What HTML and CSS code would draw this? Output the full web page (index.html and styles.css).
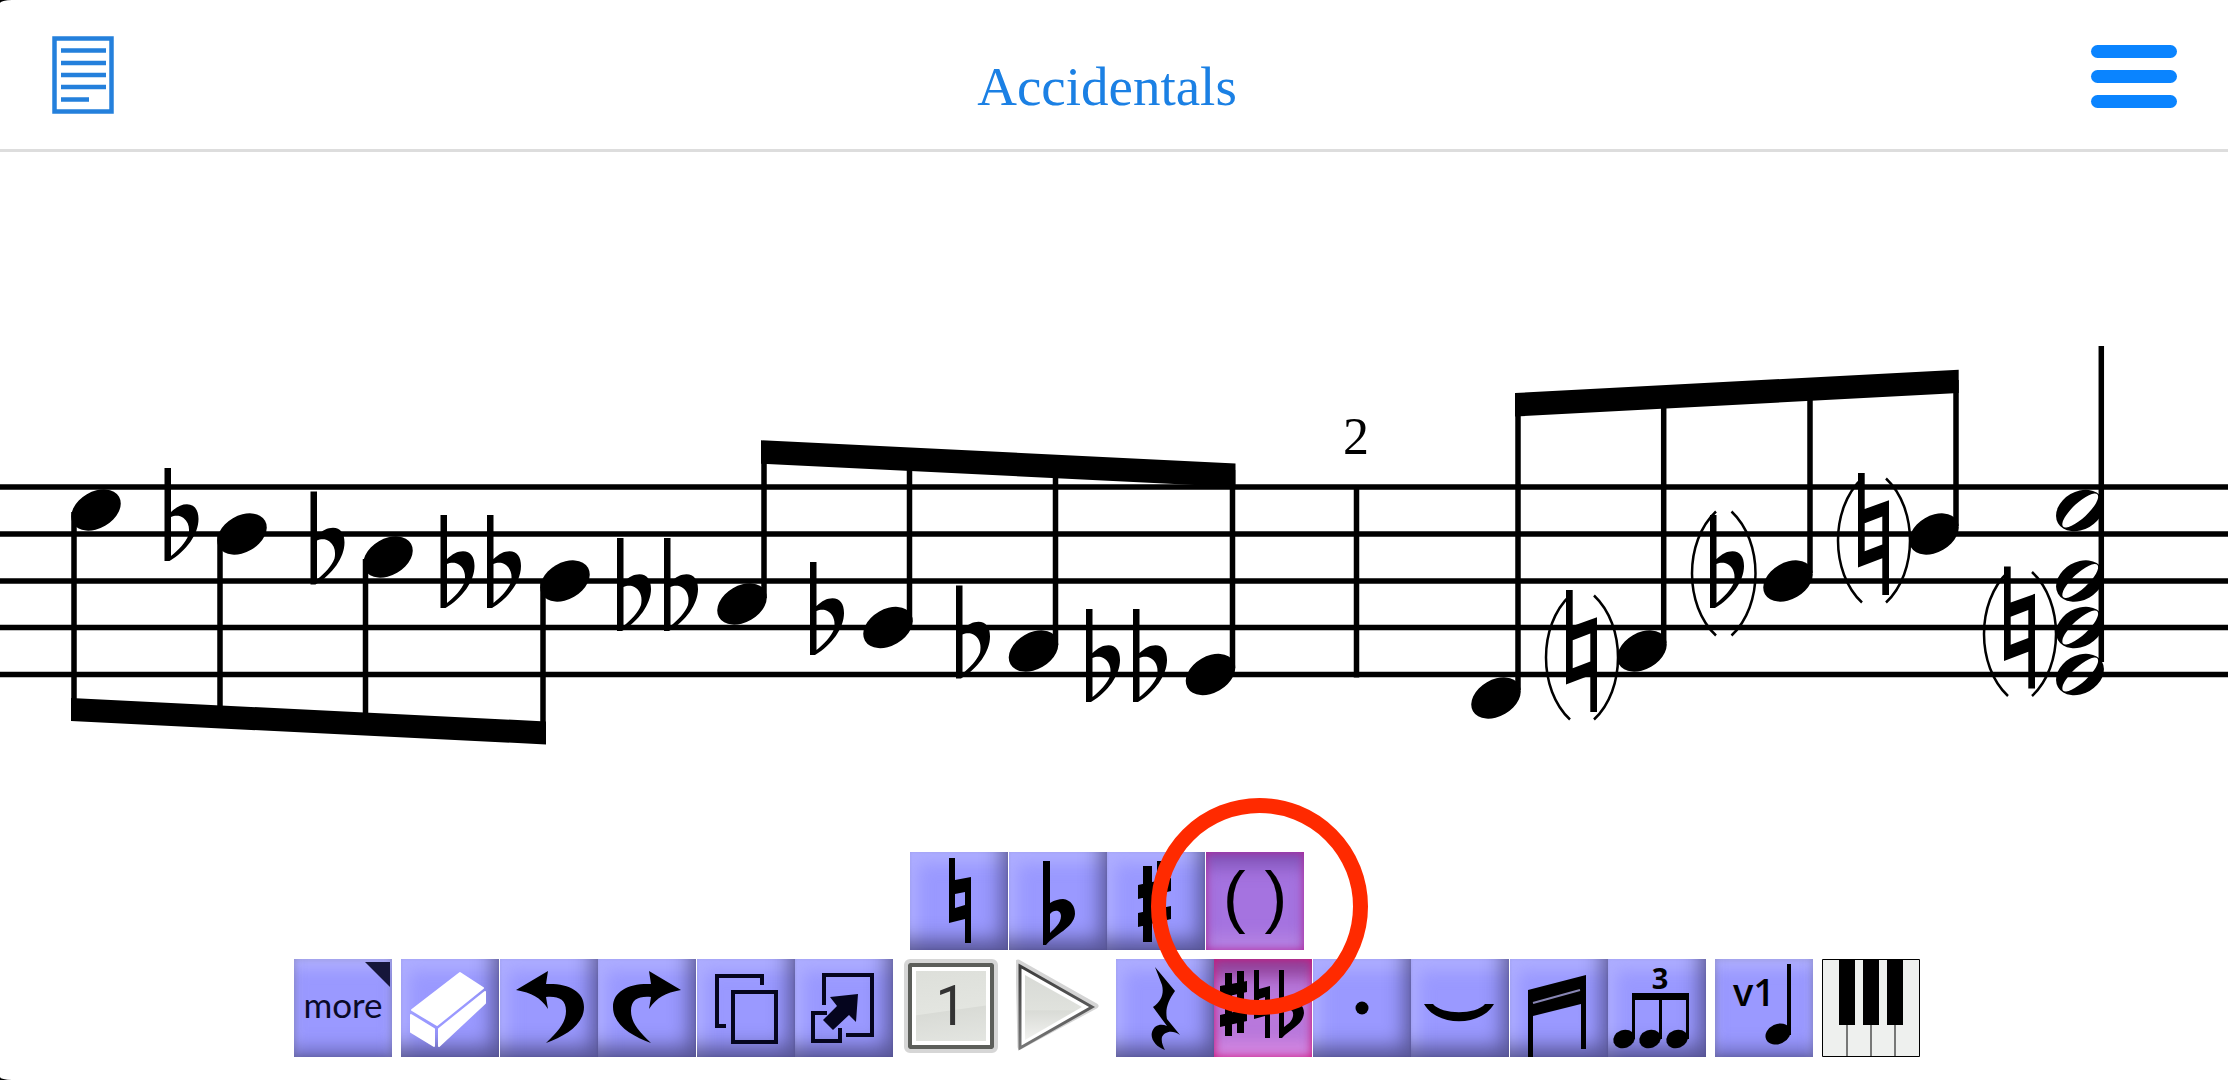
FILE: index.html
```html
<!DOCTYPE html>
<html lang="en">
<head>
    <meta charset="utf-8">
    <title>Accidentals</title>
    <link rel="stylesheet" href="styles.css">
</head>
<body>
    <div class="app">
        <header class="topbar">
            <button class="plain" aria-label="Scores">
                <svg width="62" height="78" viewBox="0 0 62 78" fill="none" stroke="#2480dc" stroke-width="4.500">
                    <path d="M2.500 2.500H59.500V75.500H2.500Z"/>
                    <path d="M9 14.500H54M9 27H54M9 39H54M9 51H54M9 63.500H37"/>
                </svg>
            </button>
            <h1>Accidentals</h1>
            <button class="plain menu" aria-label="Menu">
                <span class="bar"></span>
                <span class="bar"></span>
                <span class="bar"></span>
            </button>
        </header>

        <main class="score">
            <svg class="staff" viewBox="0 152 2228 700">
                <defs>
                    <ellipse id="note" rx="26.600" ry="18.200" transform="rotate(-30)"/>
                    <path id="half" fill-rule="evenodd" d="M-22 12.700A25.400 19 -30 0 0 22 -12.700A25.400 19 -30 0 0 -22 12.700ZM-17 16A23.500 7.500 -43 0 0 17.500 -16A23.500 7.500 -43 0 0 -17 16Z"/>
                    <path id="flat" fill-rule="evenodd" d="M0 0H6.500V44C12 39 17 36.300 22.500 36.300C30 36.300 34 42 34 51C34 66 22 83 5 93H0ZM6.500 49C10 47.500 15 47 19 50C24 54 25.500 60 24 67C21 75 14 82 6.500 88Z"/>
                    <path id="natural" fill-rule="evenodd" d="M0 0H6.700V36L31 27.300V122H24.300V85.300L0 94.500ZM6.700 50.300V78.300L24.300 71.600V43.600Z"/>
                    <path id="paren-left" d="M24 0C-8 30-8 94 24 124" fill="none" stroke="#000" stroke-width="2.500"/>
                    <path id="paren-right" d="M0 0C32 30 32 94 0 124" fill="none" stroke="#000" stroke-width="2.500"/>
                </defs>

                <!-- staff lines -->
                <path d="M0 487H2228M0 534H2228M0 581H2228M0 627.500H2228M0 674.500H2228" stroke="#000" stroke-width="5.500"/>

                <!-- first group -->
                <path d="M74 512V710M220 536V715M365.500 559V720M543 583V735" stroke="#000" stroke-width="5.500"/>
                <path d="M71 698L546 721.500V744.500L71 721Z"/>
                <use href="#note" transform="translate(96 510)"/>
                <use href="#flat" transform="translate(164.500 468)"/>
                <use href="#note" transform="translate(242 534)"/>
                <use href="#flat" transform="translate(310.500 491.500)"/>
                <use href="#note" transform="translate(388 557)"/>
                <use href="#flat" transform="translate(440.500 515)"/>
                <use href="#flat" transform="translate(487 515)"/>
                <use href="#note" transform="translate(565 581)"/>

                <!-- second group -->
                <path d="M764 598V450M909.500 622V455M1055.500 645V460M1232.500 668V470" stroke="#000" stroke-width="5.500"/>
                <path d="M761 440.300L1235.500 463.500V487L761 463.700Z"/>
                <use href="#flat" transform="translate(617 538)"/>
                <use href="#flat" transform="translate(664 538)"/>
                <use href="#note" transform="translate(742 604)"/>
                <use href="#flat" transform="translate(810 562)"/>
                <use href="#note" transform="translate(888 627.500)"/>
                <use href="#flat" transform="translate(956 585.500)"/>
                <use href="#note" transform="translate(1033.500 651)"/>
                <use href="#flat" transform="translate(1086 609)"/>
                <use href="#flat" transform="translate(1133 609)"/>
                <use href="#note" transform="translate(1210.500 674.500)"/>

                <!-- bar 2 -->
                <path d="M1356.500 487V677.500" stroke="#000" stroke-width="5.500"/>
                <text class="bar-number" x="1356" y="454">2</text>

                <path d="M1518 690V405M1663.700 643V400M1810 573V395M1956 526V380" stroke="#000" stroke-width="5.500"/>
                <path d="M1515 393L1958.700 369.700V393L1515 416.500Z"/>
                <use href="#note" transform="translate(1496 698)"/>
                <use href="#paren-left" transform="translate(1546 595.500)"/>
                <use href="#natural" transform="translate(1566 590)"/>
                <use href="#paren-right" transform="translate(1594 595.500)"/>
                <use href="#note" transform="translate(1642 651)"/>
                <use href="#paren-left" transform="translate(1692 511.500)"/>
                <use href="#flat" transform="translate(1710 515)"/>
                <use href="#paren-right" transform="translate(1731.500 511.500)"/>
                <use href="#note" transform="translate(1788 581)"/>
                <use href="#paren-left" transform="translate(1838 478.500)"/>
                <use href="#natural" transform="translate(1858 473)"/>
                <use href="#paren-right" transform="translate(1886 478.500)"/>
                <use href="#note" transform="translate(1934 534)"/>

                <!-- chord -->
                <use href="#paren-left" transform="translate(1984 572)"/>
                <use href="#natural" transform="translate(2004 566.500)"/>
                <use href="#paren-right" transform="translate(2032 572)"/>
                <path d="M2101.300 346V662" stroke="#000" stroke-width="5.500"/>
                <use href="#half" transform="translate(2080 510.500)"/>
                <use href="#half" transform="translate(2080 581)"/>
                <use href="#half" transform="translate(2080 627.500)"/>
                <use href="#half" transform="translate(2080 674.500)"/>
            </svg>
        </main>

        <footer class="toolbars">
            <div class="group accidentals">
                <button class="tool" aria-label="Natural">
                    <svg viewBox="0 0 98 98"><path fill-rule="evenodd" d="M39 6h6v22l16-3v66h-6V67l-16 4zM45 42v14l10-3V40z"/></svg>
                </button>
                <button class="tool" aria-label="Flat">
                    <svg viewBox="0 0 98 98"><path fill-rule="evenodd" d="M34 9h7v42C46 48 50 47 54 47C62 48 66 54 66 62C65 76 46 82 37 93H34zM41 62c4-5 11-4 11 2 0 7-6 12-11 17z"/></svg>
                </button>
                <button class="tool" aria-label="Sharp">
                    <svg viewBox="0 0 98 98"><path d="M36 14h9v76h-9zM50 9h9v76h-9zM31 33l33-7v13l-33 8zM31 61l33-7v13l-33 8z"/></svg>
                </button>
                <button class="tool selected" aria-label="Parentheses">
                    <span class="parens">( )</span>
                    <span class="ring"></span>
                </button>
            </div>

            <div class="row">
                <button class="tool soft">
                    <span class="more">more</span>
                    <svg class="corner" viewBox="0 0 98 98"><path d="M71 3H96V28Z" fill="#16163a"/></svg>
                </button>

                <div class="group edit">
                    <button class="tool" aria-label="Eraser">
                        <svg viewBox="0 0 98 98" fill="#fff" stroke="#fff" stroke-width="2" stroke-linejoin="round"><path d="M59 14L82 29L36 66L11 51ZM10 56L33 70V87L10 73ZM38 70L84 33V44L38 87Z"/></svg>
                    </button>
                    <button class="tool" aria-label="Undo">
                        <svg viewBox="0 0 98 98"><path d="M16 31L48 12L46 25C68 24 84 32 84 48C84 66 65 77 46 84C60 71 66 62 66 52C66 40 58 37 46 38L48 50C40 38 32 34 16 31Z"/></svg>
                    </button>
                    <button class="tool" aria-label="Redo">
                        <svg viewBox="0 0 98 98"><path transform="translate(99 0) scale(-1 1)" d="M16 31L48 12L46 25C68 24 84 32 84 48C84 66 65 77 46 84C60 71 66 62 66 52C66 40 58 37 46 38L48 50C40 38 32 34 16 31Z"/></svg>
                    </button>
                    <button class="tool" aria-label="Copy">
                        <svg viewBox="0 0 98 98" fill="none" stroke="#05051e" stroke-width="4"><path d="M29 67H20V17H65V26M36 33H79V83H36Z"/></svg>
                    </button>
                    <button class="tool" aria-label="Move">
                        <svg viewBox="0 0 98 98" fill="none" stroke="#05051e" stroke-width="4"><path d="M29 46V16H77V76H51M32 54H18V82H45V69"/><path fill="#05051e" stroke="none" d="M63 35L61 63L54 56L38 71L28 61L42 47L35 38Z"/></svg>
                    </button>
                </div>

                <div class="transport">
                    <button class="page">1</button>
                    <button class="plain" aria-label="Play">
                        <svg width="84" height="94" viewBox="0 0 84 94">
                            <defs>
                                <linearGradient id="shine" x1="0" y1="0" x2="0" y2="1">
                                    <stop offset="0" stop-color="#d8dad6"/>
                                    <stop offset=".54" stop-color="#e0e2dd"/>
                                    <stop offset=".55" stop-color="#d9dbd6"/>
                                    <stop offset="1" stop-color="#f2f2f0"/>
                                </linearGradient>
                                <linearGradient id="edge" x1="0" y1="0" x2="0" y2="1">
                                    <stop offset="0" stop-color="#3c3c3c"/>
                                    <stop offset="1" stop-color="#777"/>
                                </linearGradient>
                            </defs>
                            <path d="M2 3L80 47L4 88Z" fill="#d4d4d4" stroke="#d4d4d4" stroke-width="5" stroke-linejoin="round"/>
                            <path d="M4 7L76 48L4 89Z" fill="#fff" stroke="url(#edge)" stroke-width="3"/>
                            <path d="M9 16L66 48L9 81Z" fill="url(#shine)"/>
                        </svg>
                    </button>
                </div>

                <div class="group notes">
                    <button class="tool" aria-label="Rest">
                        <svg viewBox="0 0 98 98"><path d="M39 8L59 32C52 42 49 50 51 60L64 76C56 70 48 73 46 78C45 83 47 87 49 91C40 88 34 80 36 73C38 66 45 64 51 67L37 48C46 42 48 34 46 26Z"/></svg>
                    </button>
                    <button class="tool selected pink" aria-label="Accidentals">
                        <svg viewBox="0 0 98 98"><path fill-rule="nonzero" d="M11 14h7v63h-7zM23 12h7v62h-7zM6 27l27-5v11l-27 6zM6 56l27-6v12l-27 6z"/><path fill-rule="evenodd" d="M40 11h5v19l11-3v52h-5V57l-11 3zM45 40v9l6-2v-9zM65 11h5v34C78 40 90 42 90 54C89 66 76 70 68 79H65zM70 53c5-4 10-3 9 4-1 6-5 8-9 11z"/></svg>
                    </button>
                    <button class="tool" aria-label="Dot">
                        <svg viewBox="0 0 98 98"><circle cx="49" cy="49" r="6.500"/></svg>
                    </button>
                    <button class="tool" aria-label="Tie">
                        <svg viewBox="0 0 98 98"><path d="M13 45h9c9 11 43 11 52 0h9C70 68 26 68 13 45z"/></svg>
                    </button>
                    <button class="tool" aria-label="Beam">
                        <svg viewBox="0 0 98 98"><path d="M18 31L76 16V90h-5V45L23 57V98h-5z"/><path d="M23 44L70 31" stroke="#8886b4" stroke-width="2"/></svg>
                    </button>
                    <button class="tool" aria-label="Triplet">
                        <svg viewBox="0 0 98 98"><path d="M24 34H81V80H78V41H54V80H51V41H27V80H24Z"/><ellipse cx="16" cy="80" rx="11" ry="9" transform="rotate(-20 16 80)"/><ellipse cx="42" cy="80" rx="11" ry="9" transform="rotate(-20 42 80)"/><ellipse cx="69" cy="80" rx="11" ry="9" transform="rotate(-20 69 80)"/><text class="triplet" x="52" y="30">3</text></svg>
                    </button>
                </div>

                <button class="tool soft" aria-label="Voice 1">
                    <svg viewBox="0 0 98 98"><path d="M72 5h4v71h-4z"/><ellipse cx="63" cy="75" rx="13" ry="10" transform="rotate(-25 63 75)"/><text class="voice" x="18" y="47">v1</text></svg>
                </button>
                <button class="plain" aria-label="Keyboard">
                    <svg width="98" height="98" viewBox="0 0 98 98"><path d="M.5 .5H97.500V97.500H.5Z" fill="#eef0ee" stroke="#000"/><path d="M25 66V98M49 66V98M73 66V98" stroke="#000"/><path d="M17 0H33V66H17ZM41 0H57V66H41ZM65 0H81V66H65Z"/></svg>
                </button>
            </div>
        </footer>
    </div>
</body>
</html>
```

FILE: styles.css
```css
html {
    background: #000;
}
body {
    margin: 0;
    font-family: "Liberation Serif", serif;
}
.app {
    display: flex;
    flex-direction: column;
    min-height: 100vh;
    background: #fff;
    border-radius: 12px 0 0 12px / 3px 0 0 3px;
    overflow: hidden;
}
button {
    padding: 0;
    border: 0;
    color: #000;
    cursor: pointer;
}
svg {
    display: block;
}
.plain {
    background: none;
}

/* Header */
.topbar {
    display: grid;
    grid-template-columns: 1fr auto 1fr;
    align-items: center;
    box-sizing: border-box;
    height: 152px;
    padding: 0 66px 0 52px;
    border-bottom: 3px solid #ddd;
}
.topbar .plain {
    justify-self: start;
}
.topbar h1 {
    margin: 0;
    padding-top: 24px;
    font-size: 55px;
    line-height: 64px;
    font-weight: normal;
    color: #1b80e4;
}
.topbar .menu {
    display: flex;
    flex-direction: column;
    gap: 12px;
    justify-self: end;
    margin-right: -15px;
    padding-top: 3px;
}
.bar {
    width: 86px;
    height: 13px;
    border-radius: 7px;
    background: #0a84ff;
}

/* Score */
.score {
    flex: 1;
}
.staff {
    width: 100%;
}
.bar-number {
    font-size: 52px;
    text-anchor: middle;
}

/* Toolbars */
.toolbars {
    display: flex;
    flex-direction: column;
    align-items: center;
    gap: 9px;
    padding: 0 14px 23px 0;
}
.row {
    display: flex;
    gap: 9px;
}
.group {
    display: flex;
    justify-content: space-between;
}
.accidentals {
    width: 394px;
}
.edit {
    width: 492px;
}
.notes {
    width: 590px;
}
.tool {
    position: relative;
    width: 98px;
    height: 98px;
    background: #9a99ff;
    box-shadow: inset -14px -18px 20px -8px rgba(50, 48, 92, 0.65), inset 8px 12px 16px rgba(186, 186, 255, 0.6), inset 0 0 3px rgba(80, 80, 150, 0.4);
}
.tool svg {
    width: 98px;
    height: 98px;
}
.soft {
    box-shadow: inset 0 -16px 18px -8px rgba(70, 68, 130, 0.55), inset 0 10px 14px rgba(190, 190, 255, 0.6), inset 0 0 6px rgba(80, 80, 110, 0.6);
}
.selected {
    background: #a573e0;
    box-shadow: inset 0 0 8px #b4229a, inset 0 20px 18px -6px rgba(90, 50, 140, 0.5), inset 0 -16px 14px rgba(200, 150, 230, 0.4);
}
.pink {
    background: #b878dc;
    box-shadow: inset 0 0 9px #d0147c, inset 0 24px 16px -6px rgba(120, 30, 110, 0.6), inset 0 -16px 14px rgba(225, 140, 225, 0.6);
}
.parens {
    display: block;
    padding-bottom: 10px;
    font-family: "Liberation Sans", Arial, sans-serif;
    font-size: 68px;
    line-height: 88px;
}
.ring {
    position: absolute;
    z-index: 2;
    left: -55px;
    top: -54px;
    box-sizing: border-box;
    width: 217px;
    height: 217px;
    border: 15px solid #ff2a00;
    border-radius: 50%;
    pointer-events: none;
}
.accidentals .selected {
    z-index: 2;
}
.more {
    display: block;
    padding-bottom: 8px;
    font-family: Lato, sans-serif;
    font-size: 35px;
    line-height: 90px;
    color: #0a0a28;
}
.corner {
    position: absolute;
    left: 0;
    top: 0;
}
.transport {
    display: flex;
    align-items: flex-start;
    gap: 18px;
    padding: 0 7px 0 2px;
}
.page {
    width: 94px;
    height: 94px;
    border: 4px solid #d6d6d6;
    border-radius: 6px;
    background: linear-gradient(172deg, #dcded9, #e3e5e0 54%, #d9dbd6 55%, #e6e8e4);
    box-shadow: inset 0 0 0 4px #5c5e5a, inset 0 0 0 8px #fff;
    font-family: Roboto, sans-serif;
    font-size: 55px;
    line-height: 86px;
    color: #333;
}
.triplet {
    font-family: "Open Sans", sans-serif;
    font-weight: 700;
    font-size: 29px;
    text-anchor: middle;
}
.voice {
    font-family: "Open Sans", sans-serif;
    font-weight: 600;
    font-size: 38px;
}
```
